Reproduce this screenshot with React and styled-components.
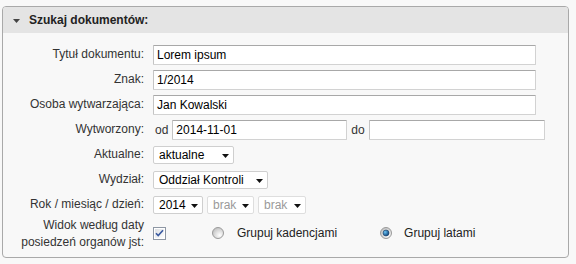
import React from "react";
import styled, { createGlobalStyle } from "styled-components";

const GlobalStyle = createGlobalStyle`
  html, body {
    margin: 0;
    background: #f8f8f8;
    font-family: "Liberation Sans", Arial, sans-serif;
    font-size: 12px;
    color: #333;
  }
`;

const Page = styled.div`
  padding: 6px 7px 0 2px;
`;

const Panel = styled.section`
  box-sizing: border-box;
  width: 567px;
  height: 252px;
  border: 1px solid #a9a9a9;
  border-radius: 4px;
  background: #f8f8f8;
  overflow: hidden;
`;

const Header = styled.div`
  height: 26px;
  display: flex;
  align-items: center;
  gap: 9px;
  padding-left: 10px;
  background: #e4e4e4;
  font-weight: bold;
  font-size: 12px;
  color: #222;
`;

const HeaderArrow = styled.svg`
  width: 7px;
  height: 4px;
  margin-top: 1px;
  display: block;
`;

const Form = styled.div`
  display: flex;
  flex-direction: column;
  padding-top: 9px;
`;

const Row = styled.div`
  display: grid;
  grid-template-columns: 141px 1fr;
  column-gap: 9px;
  align-items: ${(p) => (p.$top ? "start" : "center")};
  min-height: 25px;
`;

const Label = styled.div`
  text-align: right;
  line-height: 17px;
  color: #333;
`;

const Field = styled.div`
  display: flex;
  align-items: center;
  gap: ${(p) => p.$gap || 4}px;
  padding-top: ${(p) => p.$pt || 0}px;
`;

const TextInput = styled.div`
  box-sizing: border-box;
  flex: 0 0 auto;
  width: ${(p) => p.$w}px;
  height: 20px;
  display: flex;
  align-items: center;
  padding: 0 3px;
  background: #fff;
  border: 1px solid #d2d2d2;
  border-top-color: #a8a8a8;
  border-left-color: #c4c4c4;
  border-radius: 1px;
  color: #000;
`;

const Word = styled.span`
  flex: 0 0 auto;
  color: #333;
  margin-left: ${(p) => p.$ml || 0}px;
`;

const Select = styled.div`
  box-sizing: border-box;
  flex: 0 0 auto;
  width: ${(p) => p.$w}px;
  height: 18px;
  display: flex;
  align-items: center;
  justify-content: space-between;
  padding: 0 4px 0 5px;
  background: #fff;
  border: 1px solid ${(p) => (p.$disabled ? "#dedede" : "#cfcfcf")};
  border-radius: 2px;
  color: ${(p) => (p.$disabled ? "#9a9a9a" : "#000")};
`;

const SelectArrow = styled.svg`
  width: 7px;
  height: 4px;
  margin-top: 3px;
  display: block;
`;

const Group = styled.div`
  display: flex;
  gap: 4px;
`;

const Choice = styled.label`
  flex: 0 0 auto;
  display: flex;
  align-items: center;
  gap: ${(p) => p.$gap}px;
  margin-left: ${(p) => p.$ml || 0}px;
  color: #222;
`;

const Arrow = () => (
  <SelectArrow viewBox="0 0 7 4">
    <path d="M0 0H7L3.5 4Z" fill="#111" />
  </SelectArrow>
);

const Dropdown = ({ w, value, disabled }) => (
  <Select $w={w} $disabled={disabled}>
    <span>{value}</span>
    <Arrow />
  </Select>
);

const Checkbox = () => (
  <svg width="13" height="13" viewBox="0 0 13 13" style={{ display: "block", flex: "0 0 auto" }}>
    <defs>
      <linearGradient id="cbg" x1="0" y1="0" x2="1" y2="1">
        <stop offset="0" stopColor="#dcdfe3" />
        <stop offset="1" stopColor="#ffffff" />
      </linearGradient>
    </defs>
    <rect x="0.5" y="0.5" width="12" height="12" fill="#fff" stroke="#8e97a4" />
    <rect x="2" y="2" width="9" height="9" fill="url(#cbg)" />
    <path d="M3 6.2 L5.2 8.6 L10 3.2" fill="none" stroke="#3a5aa0" strokeWidth="1.6" />
  </svg>
);

const Radio = ({ checked, id }) => (
  <svg width="12" height="12" viewBox="0 0 12 12" style={{ display: "block", flex: "0 0 auto" }}>
    <defs>
      <radialGradient id={`rg${id}`} cx="0.65" cy="0.7" r="0.7">
        <stop offset="0" stopColor="#ffffff" />
        <stop offset="1" stopColor="#c4c4c4" />
      </radialGradient>
      <radialGradient id={`rd${id}`} cx="0.35" cy="0.35" r="0.7">
        <stop offset="0" stopColor="#6cc4f4" />
        <stop offset="1" stopColor="#083f78" />
      </radialGradient>
    </defs>
    <circle cx="6" cy="6" r="5.5" fill={`url(#rg${id})`} stroke="#9a9a9a" />
    {checked && <circle cx="6" cy="6" r="3" fill={`url(#rd${id})`} stroke="#1f3f66" strokeWidth="0.6" />}
  </svg>
);

export default function App() {
  return (
    <>
      <GlobalStyle />
      <Page>
        <Panel>
          <Header>
            <HeaderArrow viewBox="0 0 7 4">
              <path d="M0 0H7L3.5 4Z" fill="#444" />
            </HeaderArrow>
            <span>Szukaj dokumentów:</span>
          </Header>
          <Form>
            <Row>
              <Label>Tytuł dokumentu:</Label>
              <Field>
                <TextInput $w={383}>Lorem ipsum</TextInput>
              </Field>
            </Row>
            <Row>
              <Label>Znak:</Label>
              <Field>
                <TextInput $w={383}>1/2014</TextInput>
              </Field>
            </Row>
            <Row>
              <Label>Osoba wytwarzająca:</Label>
              <Field>
                <TextInput $w={383}>Jan Kowalski</TextInput>
              </Field>
            </Row>
            <Row>
              <Label>Wytworzony:</Label>
              <Field $gap={4}>
                <Word $ml={2}>od</Word>
                <TextInput $w={175}>2014-11-01</TextInput>
                <Word $ml={0}>do</Word>
                <TextInput $w={176}></TextInput>
              </Field>
            </Row>
            <Row>
              <Label>Aktualne:</Label>
              <Field>
                <Dropdown w={81} value="aktualne" />
              </Field>
            </Row>
            <Row>
              <Label>Wydział:</Label>
              <Field>
                <Dropdown w={115} value="Oddział Kontroli" />
              </Field>
            </Row>
            <Row>
              <Label>Rok / miesiąc / dzień:</Label>
              <Field>
                <Group>
                  <Dropdown w={50} value="2014" />
                  <Dropdown w={47} value="brak" disabled />
                  <Dropdown w={48} value="brak" disabled />
                </Group>
              </Field>
            </Row>
            <Row $top>
              <Label>
                Widok według daty
                <br />
                posiedzeń organów jst:
              </Label>
              <Field $gap={0} $pt={9}>
                <Checkbox />
                <Choice $gap={13} $ml={42}>
                  <Radio id="a" />
                  <span>Grupuj kadencjami</span>
                </Choice>
                <Choice $gap={12} $ml={39}>
                  <Radio id="b" checked />
                  <span>Grupuj latami</span>
                </Choice>
              </Field>
            </Row>
          </Form>
        </Panel>
      </Page>
    </>
  );
}
